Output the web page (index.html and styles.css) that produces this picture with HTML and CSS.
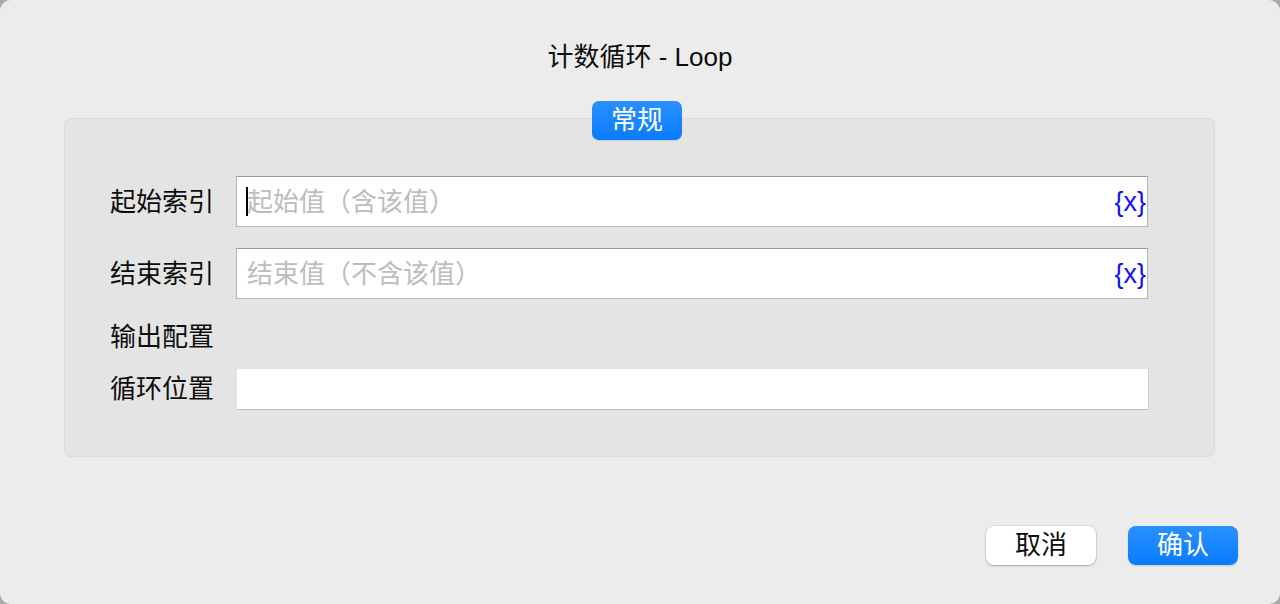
FILE: index.html
```html
<!DOCTYPE html>
<html lang="zh">
<head>
<meta charset="utf-8">
<title>计数循环 - Loop</title>
<link rel="stylesheet" href="styles.css">
</head>
<body>
<div class="window">
  <div class="title">计数循环 - Loop</div>
  <div class="panel">
    <div class="tab">常规</div>
    <div class="row row-first">
      <div class="label">起始索引</div>
      <div class="field">
        <span class="caret"></span>
        <span class="placeholder">起始值（含该值）</span>
        <span class="var">{x}</span>
      </div>
    </div>
    <div class="row row-second">
      <div class="label">结束索引</div>
      <div class="field">
        <span class="placeholder">结束值（不含该值）</span>
        <span class="var">{x}</span>
      </div>
    </div>
    <div class="row row-section">
      <div class="label">输出配置</div>
    </div>
    <div class="row row-last">
      <div class="label">循环位置</div>
      <div class="field field-plain"></div>
    </div>
  </div>
  <div class="actions">
    <button class="btn btn-cancel">取消</button>
    <button class="btn btn-ok">确认</button>
  </div>
</div>
</body>
</html>
```

FILE: styles.css
```css
html, body {
  margin: 0;
  padding: 0;
  background: #a9a9a9;
}
body {
  font-family: "Liberation Sans", "Noto Sans CJK SC", sans-serif;
  color: #0d0d0d;
}
.window {
  width: 1280px;
  height: 604px;
  background: #ececec;
  border-radius: 11px;
  display: flex;
  flex-direction: column;
  box-sizing: border-box;
  padding-top: 40px;
}
.title {
  text-align: center;
  font-size: 26px;
  line-height: 34px;
  height: 34px;
}
.panel {
  position: relative;
  margin: 44px 0 0 64px;
  width: 1151px;
  height: 339px;
  box-sizing: border-box;
  background: #e4e4e4;
  border: 1px solid #dadada;
  border-radius: 7px;
  padding: 57px 66px 0 45px;
  display: flex;
  flex-direction: column;
}
.tab {
  position: absolute;
  top: -18px;
  left: 527px;
  width: 90px;
  height: 39px;
  box-sizing: border-box;
  border-radius: 7px;
  background: linear-gradient(#2a90fd, #0a7bff);
  color: #fff;
  font-size: 26px;
  line-height: 39px;
  text-align: center;
  box-shadow: 0 1px 1px rgba(0,0,0,0.12);
}
.row {
  display: flex;
  align-items: center;
}
.label {
  width: 126px;
  flex: none;
  font-size: 26px;
  line-height: 34px;
}
.field {
  flex: 1;
  height: 51px;
  box-sizing: border-box;
  background: #fff;
  border: 1px solid #b4b4b4;
  border-top-color: #9a9a9a;
  display: flex;
  align-items: center;
  padding: 0 0 0 10px;
  position: relative;
}
.row-second {
  margin-top: 21px;
}
.row-section {
  margin-top: 21px;
  height: 34px;
}
.row-last {
  margin-top: 15px;
}
.field-plain {
  height: 40px;
  border: none;
  margin-left: 1px;
  box-shadow: 0 1px 0 #bdbdbd, 1px 0 0 #d0d0d0;
}
.caret {
  width: 2px;
  height: 29px;
  background: #000;
  margin-left: -1px;
  margin-right: -1px;
}
.placeholder {
  flex: 1;
  color: #bdbdbd;
  font-size: 26px;
  line-height: 34px;
}
.var {
  color: #1414f0;
  font-size: 27px;
  line-height: 34px;
  margin-right: 1px;
}
.actions {
  margin-top: 69px;
  display: flex;
  justify-content: flex-end;
  gap: 32px;
  padding-right: 42px;
}
.btn {
  width: 110px;
  height: 39px;
  border-radius: 8px;
  border: none;
  font-family: inherit;
  font-size: 26px;
  line-height: 39px;
  padding: 0;
}
.btn-cancel {
  background: #fff;
  color: #0d0d0d;
  box-shadow: 0 0 0 0.5px rgba(0,0,0,0.12), 0 1px 2px rgba(0,0,0,0.25);
}
.btn-ok {
  background: linear-gradient(#2a90fd, #0a7bff);
  color: #fff;
  box-shadow: 0 1px 2px rgba(0,0,0,0.15);
}
```
